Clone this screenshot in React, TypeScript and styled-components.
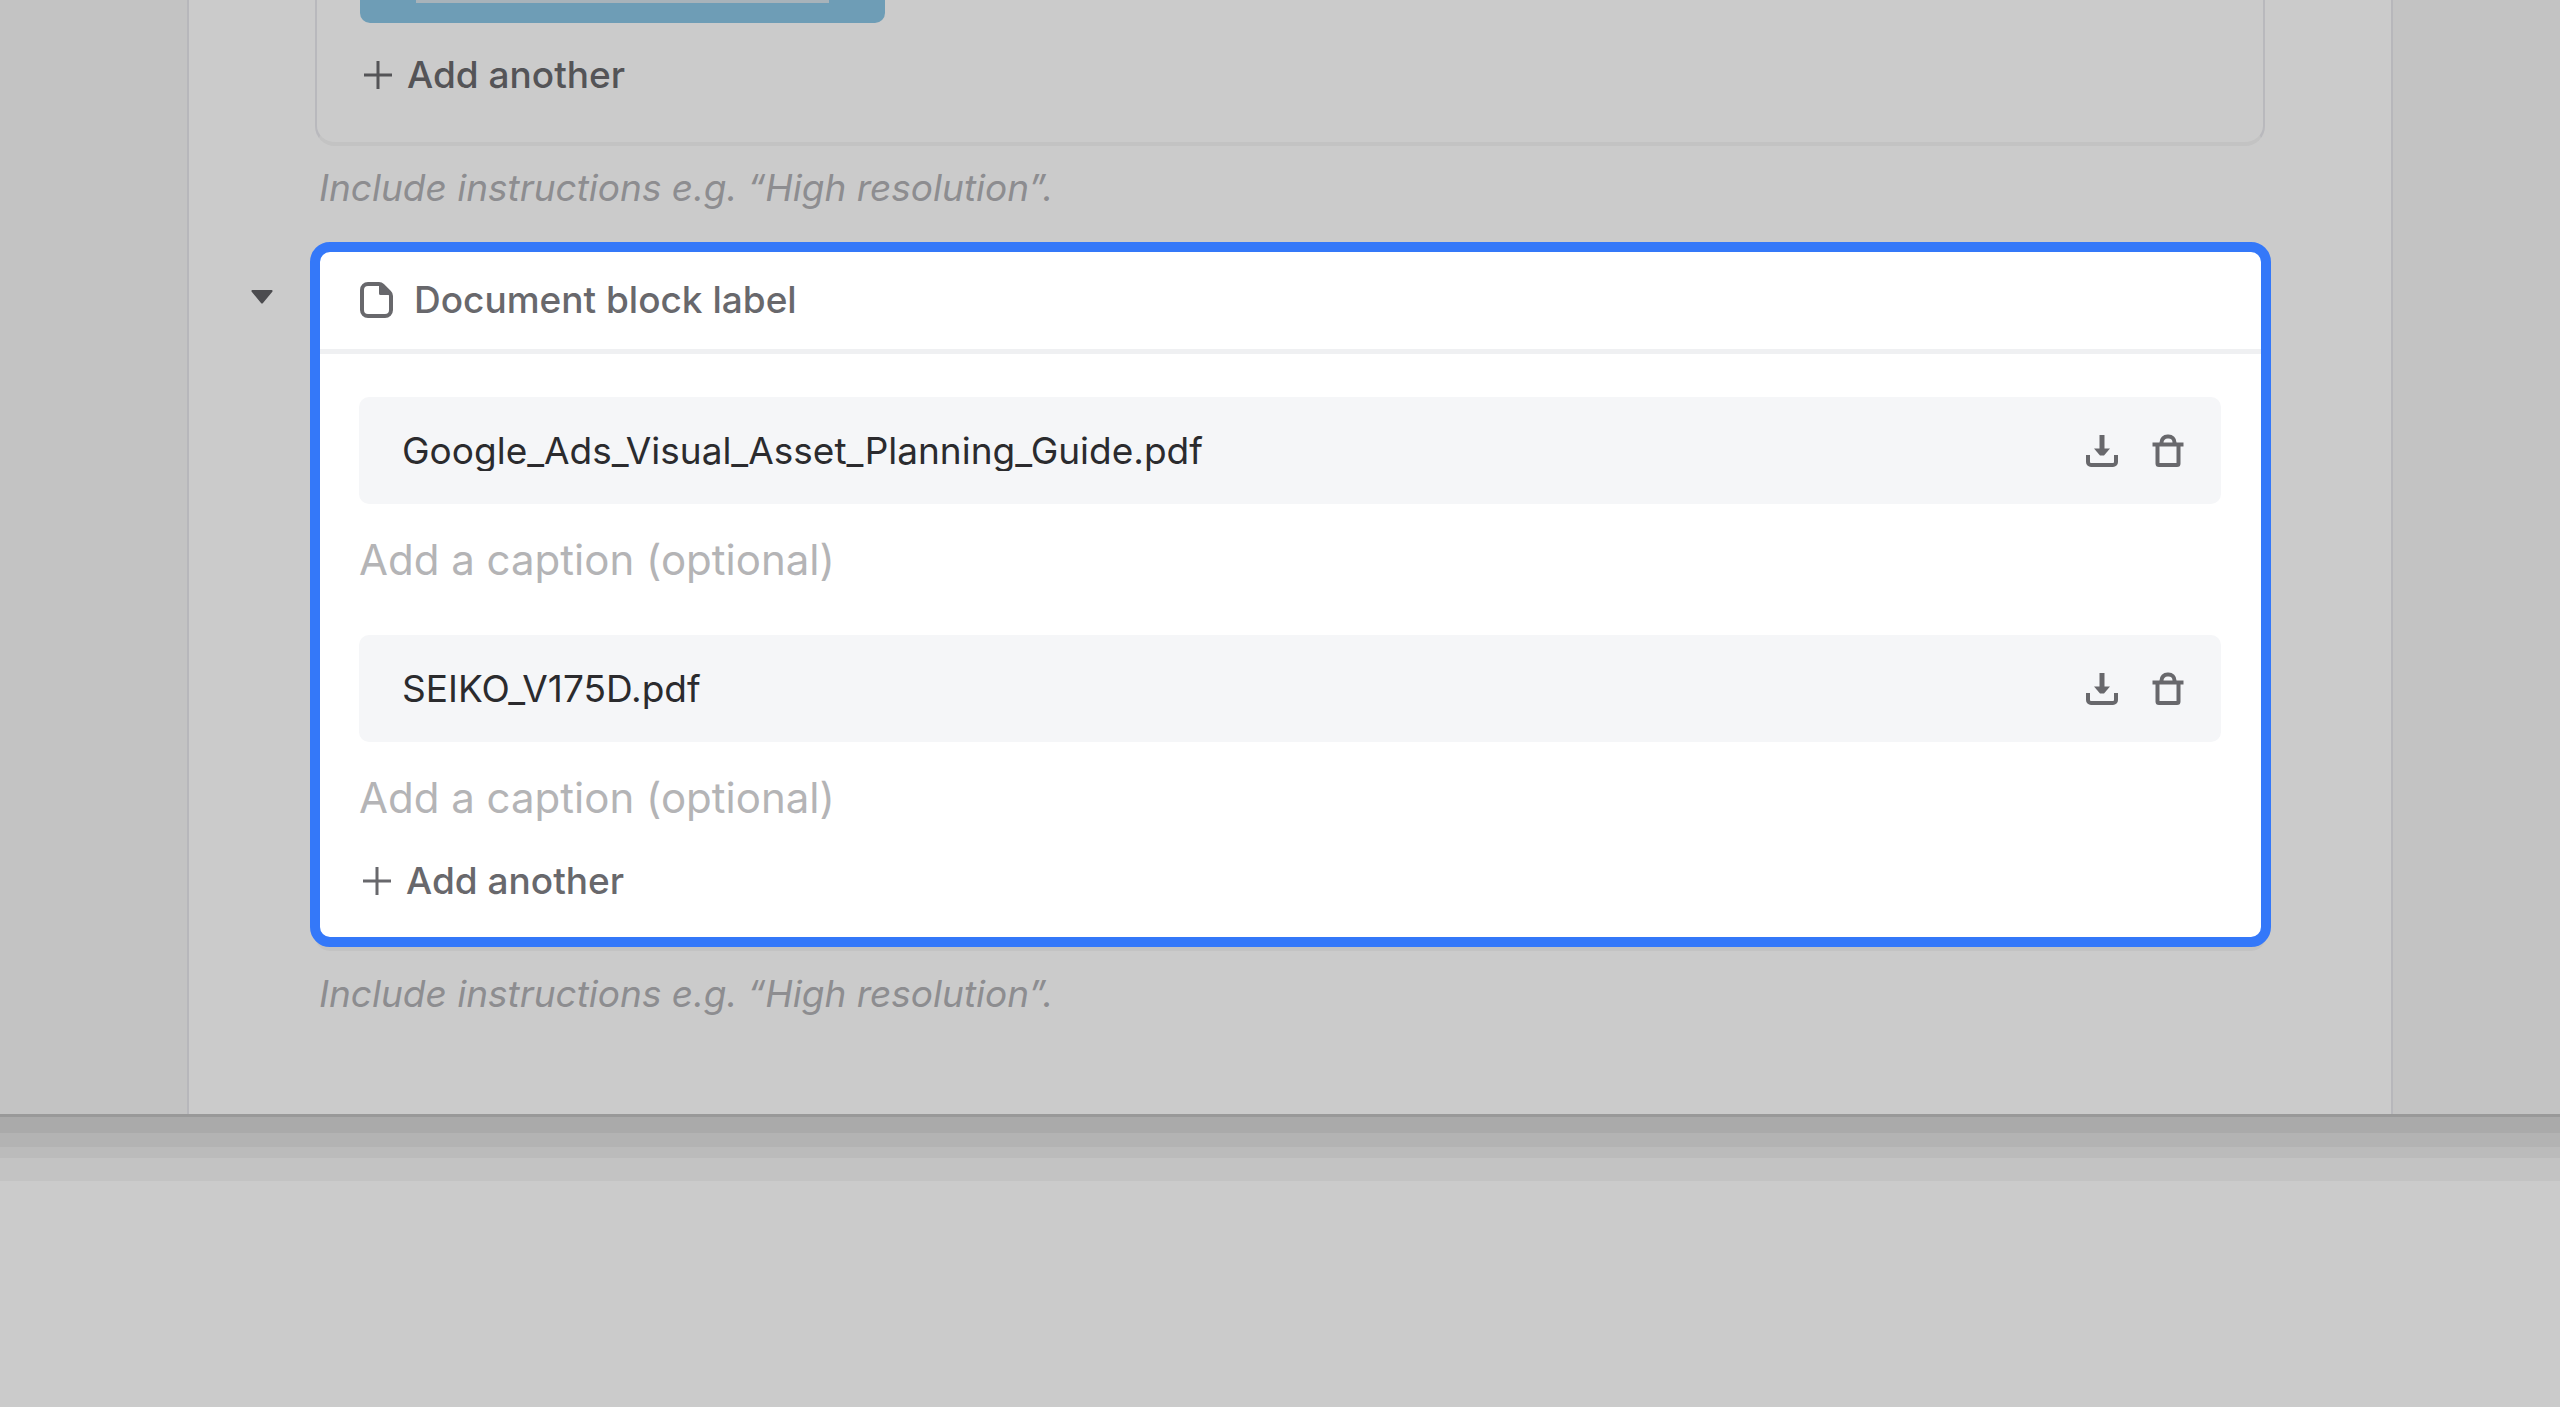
import React from "react";
import styled, { createGlobalStyle } from "styled-components";

const GlobalStyle = createGlobalStyle`
  *, *::before, *::after { box-sizing: border-box; }
  body {
    margin: 0;
    background: #cbcbcb;
    font-family: Inter, "Liberation Sans", sans-serif;
  }
  button, input { font: inherit; }
`;

const AppWindow = styled.div`
  display: grid;
  grid-template-columns: 187px minmax(0, 1fr) 167px;
  background: #c3c3c3;
  border-bottom: 3px solid #999999;
`;

const WindowShadow = styled.div`
  height: 64px;
  background: linear-gradient(
    #aaaaaa 16px,
    #b3b3b3 16px 30px,
    #bbbbbb 30px 41px,
    #c3c3c3 41px
  );
`;

const Panel = styled.main`
  grid-column: 2;
  padding: 0 126px 66px 0;
  background: #cbcbcb;
  border: solid #b7b7bb;
  border-width: 0 2px;
`;

const Block = styled.section`
  display: grid;
  grid-template-columns: 126px minmax(0, 1fr);
  align-items: start;
`;

const BlockColumn = styled.div`
  grid-column: 2;
  display: flex;
  flex-direction: column;
`;

const Card = styled.div<{ $active?: boolean }>`
  ${(p) =>
    p.$active
      ? `
    margin: 0 -6px 5px -5px;
    background: #ffffff;
    border: 10px solid #3478f9;
    border-radius: 20px;
    box-shadow: 0 9px 0 -5px #c3c3c3;
  `
      : `
    border: solid;
    border-width: 0 2px 4px;
    border-color: #b9b9bd #b9b9bd #c3c3c3;
    border-radius: 0 0 20px 20px;
  `}
`;

const CardHeader = styled.header`
  display: flex;
  align-items: center;
  gap: 20px;
  height: 102px;
  padding: 0 40px 2px;
  border-bottom: 5px solid #eff0f2;
  color: #68686c;
`;

const BlockLabel = styled.h2`
  margin: 0;
  font-size: 37px;
  line-height: 48px;
  font-weight: 500;
`;

const CardBody = styled.div<{ $first?: boolean }>`
  padding: ${(p) => (p.$first ? "0 43px 43px" : "43px 40px 32px 39px")};
`;

const Thumbnail = styled.div`
  width: 525px;
  height: 23px;
  padding: 0 56px;
  background: #6e9db6;
  border-radius: 0 0 10px 10px;
`;

const ThumbnailPage = styled.div`
  height: 3px;
  background: #a8b3ba;
`;

const FileList = styled.ul`
  display: flex;
  flex-direction: column;
  gap: 48px;
  margin: 0;
  padding: 0;
  list-style: none;
`;

const FileRow = styled.div`
  display: flex;
  align-items: center;
  height: 107px;
  padding: 0 36px 0 43px;
  background: #f5f6f8;
  border-radius: 10px;
`;

const FileName = styled.span`
  flex: 1;
  overflow: hidden;
  white-space: nowrap;
  text-overflow: ellipsis;
  font-size: 37px;
  line-height: 40px;
  color: #2b2b2e;
`;

const IconButton = styled.button`
  display: flex;
  padding: 0;
  margin-left: 32px;
  border: 0;
  background: none;
  color: #68686c;
`;

const CaptionInput = styled.input`
  display: block;
  width: 100%;
  height: 56px;
  margin-top: 27px;
  padding: 0;
  border: 0;
  outline: 0;
  background: none;
  font-size: 42px;
  color: #2b2b2e;

  &::placeholder {
    color: #b4b4b6;
    opacity: 1;
  }
`;

const AddButton = styled.button<{ $dim?: boolean }>`
  display: flex;
  align-items: center;
  gap: 15px;
  margin-top: ${(p) => (p.$dim ? 28 : 32)}px;
  padding: 0 0 0 4px;
  border: 0;
  background: none;
  font-size: 37px;
  line-height: 48px;
  font-weight: 500;
  color: ${(p) => (p.$dim ? "#545457" : "#68686c")};
`;

const HelpText = styled.p`
  margin: 18px 0 30px 4px;
  font-size: 37px;
  line-height: 48px;
  font-style: italic;
  color: #8d8d90;
`;

const Toggle = styled.button`
  display: flex;
  justify-self: start;
  margin: 48px 0 0 62px;
  padding: 0;
  border: 0;
  background: none;
  color: #4c4c4f;
`;

const PlusIcon = () => (
  <svg width="28" height="28" viewBox="0 0 28 28" fill="none" stroke="currentColor" strokeWidth="3" aria-hidden="true">
    <path d="M14 0v28M0 14h28" />
  </svg>
);

const DocumentIcon = () => (
  <svg width="34" height="38" viewBox="0 0 34 38" fill="none" stroke="currentColor" strokeWidth="4" strokeLinejoin="round" aria-hidden="true">
    <path d="M8 3h11q2 0 3.500 1.500l7 7q1.500 1.500 1.500 3.500v14a6 6 0 0 1-6 6h-17a6 6 0 0 1-6-6v-20a6 6 0 0 1 6-6z" />
    <path d="M20.500 5v7.500h8.500z" fill="currentColor" strokeWidth="3" />
  </svg>
);

const DownloadIcon = () => (
  <svg width="34" height="34" viewBox="0 0 34 34" fill="none" stroke="currentColor" strokeWidth="4" aria-hidden="true">
    <path d="M17 1v16" strokeWidth="5" />
    <path d="M9 14.500h16l-6 7h-4z" fill="currentColor" stroke="none" />
    <path d="M3 21v7a3 3 0 0 0 3 3h22a3 3 0 0 0 3-3v-7" />
  </svg>
);

const TrashIcon = () => (
  <svg width="34" height="36" viewBox="0 0 34 36" fill="none" stroke="currentColor" strokeWidth="4" aria-hidden="true">
    <path d="M1.500 11.500h31" />
    <path d="M10.500 11v-1.500a6 6 0 0 1 6-6h1a6 6 0 0 1 6 6v1.500" />
    <path d="M6.500 11.500v19a1.500 1.500 0 0 0 1.500 1.500h18a1.500 1.500 0 0 0 1.500-1.500v-19" />
  </svg>
);

const CaretIcon = () => (
  <svg width="22" height="14" viewBox="0 0 22 14" fill="currentColor" aria-hidden="true">
    <path d="M1.500 0h19a1 1 0 0 1 .8 1.700l-9.300 11.300a1.300 1.300 0 0 1-2 0l-9.300-11.300a1 1 0 0 1 .8-1.700z" />
  </svg>
);

const files = ["Google_Ads_Visual_Asset_Planning_Guide.pdf", "SEIKO_V175D.pdf"];

const FileItem = ({ name }: { name: string }) => (
  <li>
    <FileRow>
      <FileName>{name}</FileName>
      <IconButton type="button" aria-label={`Download ${name}`}>
        <DownloadIcon />
      </IconButton>
      <IconButton type="button" aria-label={`Delete ${name}`}>
        <TrashIcon />
      </IconButton>
    </FileRow>
    <CaptionInput type="text" aria-label={`Caption for ${name}`} placeholder="Add a caption (optional)" />
  </li>
);

const Instructions = () => <HelpText>Include instructions e.g. “High resolution”.</HelpText>;

export default function App() {
  return (
    <>
      <GlobalStyle />
      <AppWindow>
        <Panel>
          <Block>
            <BlockColumn>
              <Card>
                <CardBody $first>
                  <Thumbnail>
                    <ThumbnailPage />
                  </Thumbnail>
                  <AddButton type="button" $dim>
                    <PlusIcon />
                    Add another
                  </AddButton>
                </CardBody>
              </Card>
              <Instructions />
            </BlockColumn>
          </Block>
          <Block>
            <Toggle type="button" aria-label="Collapse block">
              <CaretIcon />
            </Toggle>
            <BlockColumn>
              <Card $active>
                <CardHeader>
                  <DocumentIcon />
                  <BlockLabel>Document block label</BlockLabel>
                </CardHeader>
                <CardBody>
                  <FileList>
                    {files.map((name) => (
                      <FileItem key={name} name={name} />
                    ))}
                  </FileList>
                  <AddButton type="button">
                    <PlusIcon />
                    Add another
                  </AddButton>
                </CardBody>
              </Card>
              <Instructions />
            </BlockColumn>
          </Block>
        </Panel>
      </AppWindow>
      <WindowShadow />
    </>
  );
}
